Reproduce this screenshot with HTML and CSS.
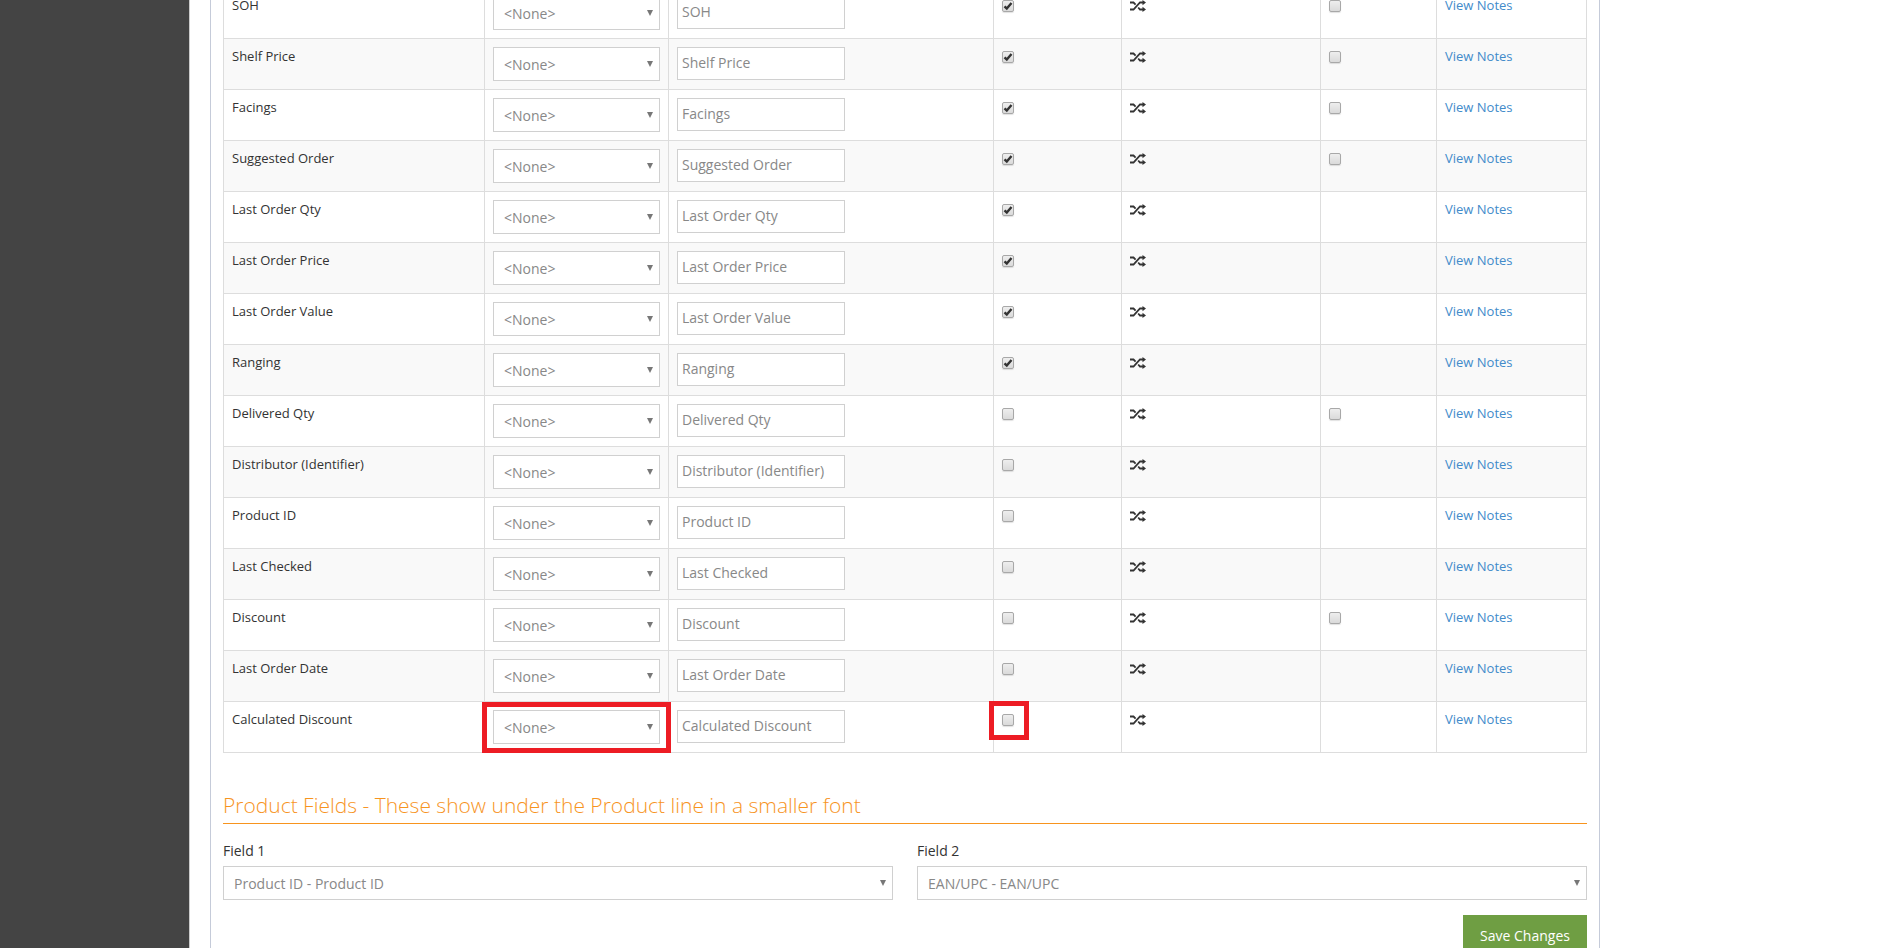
FILE: index.html
```html
<!DOCTYPE html>
<html lang="en">
<head>
    <meta charset="UTF-8">
    <meta name="viewport" content="width=device-width, initial-scale=1.0">
    <title>Order Fields</title>
    <link rel="stylesheet" href="styles.css">
</head>
<body>
    <svg class="sprite" aria-hidden="true">
        <symbol id="shuffle" viewBox="0 0 16 12">
            <path d="M0 2.500h3.500L5.600 4.600M0 9.500h3.500L10 2.500h3.500M8.200 7.500L10 9.500h3.500" fill="none" stroke="#333" stroke-width="1.800"/>
            <path d="M12.500 0L16 2.500 12.500 5.200zM12.500 6.800L16 9.500 12.500 12z" fill="#333"/>
        </symbol>
    </svg>
    <div class="page">
        <aside class="sidebar"></aside>
        <main class="panel">
            <table class="fields">
                <colgroup>
                    <col class="col-name">
                    <col class="col-map">
                    <col class="col-label">
                    <col class="col-show">
                    <col class="col-order">
                    <col class="col-edit">
                    <col class="col-notes">
                </colgroup>
                <tbody>
                    <tr>
                        <td>SOH</td>
                        <td><select aria-label="SOH mapping"><option>&lt;None&gt;</option></select></td>
                        <td><input type="text" aria-label="SOH label" value="SOH"></td>
                        <td><input type="checkbox" aria-label="Show SOH" checked></td>
                        <td><svg class="icon"><use href="#shuffle"/></svg></td>
                        <td><input type="checkbox" aria-label="Edit SOH"></td>
                        <td><a href="#">View Notes</a></td>
                    </tr>
                    <tr>
                        <td>Shelf Price</td>
                        <td><select aria-label="Shelf Price mapping"><option>&lt;None&gt;</option></select></td>
                        <td><input type="text" aria-label="Shelf Price label" value="Shelf Price"></td>
                        <td><input type="checkbox" aria-label="Show Shelf Price" checked></td>
                        <td><svg class="icon"><use href="#shuffle"/></svg></td>
                        <td><input type="checkbox" aria-label="Edit Shelf Price"></td>
                        <td><a href="#">View Notes</a></td>
                    </tr>
                    <tr>
                        <td>Facings</td>
                        <td><select aria-label="Facings mapping"><option>&lt;None&gt;</option></select></td>
                        <td><input type="text" aria-label="Facings label" value="Facings"></td>
                        <td><input type="checkbox" aria-label="Show Facings" checked></td>
                        <td><svg class="icon"><use href="#shuffle"/></svg></td>
                        <td><input type="checkbox" aria-label="Edit Facings"></td>
                        <td><a href="#">View Notes</a></td>
                    </tr>
                    <tr>
                        <td>Suggested Order</td>
                        <td><select aria-label="Suggested Order mapping"><option>&lt;None&gt;</option></select></td>
                        <td><input type="text" aria-label="Suggested Order label" value="Suggested Order"></td>
                        <td><input type="checkbox" aria-label="Show Suggested Order" checked></td>
                        <td><svg class="icon"><use href="#shuffle"/></svg></td>
                        <td><input type="checkbox" aria-label="Edit Suggested Order"></td>
                        <td><a href="#">View Notes</a></td>
                    </tr>
                    <tr>
                        <td>Last Order Qty</td>
                        <td><select aria-label="Last Order Qty mapping"><option>&lt;None&gt;</option></select></td>
                        <td><input type="text" aria-label="Last Order Qty label" value="Last Order Qty"></td>
                        <td><input type="checkbox" aria-label="Show Last Order Qty" checked></td>
                        <td><svg class="icon"><use href="#shuffle"/></svg></td>
                        <td></td>
                        <td><a href="#">View Notes</a></td>
                    </tr>
                    <tr>
                        <td>Last Order Price</td>
                        <td><select aria-label="Last Order Price mapping"><option>&lt;None&gt;</option></select></td>
                        <td><input type="text" aria-label="Last Order Price label" value="Last Order Price"></td>
                        <td><input type="checkbox" aria-label="Show Last Order Price" checked></td>
                        <td><svg class="icon"><use href="#shuffle"/></svg></td>
                        <td></td>
                        <td><a href="#">View Notes</a></td>
                    </tr>
                    <tr>
                        <td>Last Order Value</td>
                        <td><select aria-label="Last Order Value mapping"><option>&lt;None&gt;</option></select></td>
                        <td><input type="text" aria-label="Last Order Value label" value="Last Order Value"></td>
                        <td><input type="checkbox" aria-label="Show Last Order Value" checked></td>
                        <td><svg class="icon"><use href="#shuffle"/></svg></td>
                        <td></td>
                        <td><a href="#">View Notes</a></td>
                    </tr>
                    <tr>
                        <td>Ranging</td>
                        <td><select aria-label="Ranging mapping"><option>&lt;None&gt;</option></select></td>
                        <td><input type="text" aria-label="Ranging label" value="Ranging"></td>
                        <td><input type="checkbox" aria-label="Show Ranging" checked></td>
                        <td><svg class="icon"><use href="#shuffle"/></svg></td>
                        <td></td>
                        <td><a href="#">View Notes</a></td>
                    </tr>
                    <tr>
                        <td>Delivered Qty</td>
                        <td><select aria-label="Delivered Qty mapping"><option>&lt;None&gt;</option></select></td>
                        <td><input type="text" aria-label="Delivered Qty label" value="Delivered Qty"></td>
                        <td><input type="checkbox" aria-label="Show Delivered Qty"></td>
                        <td><svg class="icon"><use href="#shuffle"/></svg></td>
                        <td><input type="checkbox" aria-label="Edit Delivered Qty"></td>
                        <td><a href="#">View Notes</a></td>
                    </tr>
                    <tr>
                        <td>Distributor (Identifier)</td>
                        <td><select aria-label="Distributor mapping"><option>&lt;None&gt;</option></select></td>
                        <td><input type="text" aria-label="Distributor label" value="Distributor (Identifier)"></td>
                        <td><input type="checkbox" aria-label="Show Distributor"></td>
                        <td><svg class="icon"><use href="#shuffle"/></svg></td>
                        <td></td>
                        <td><a href="#">View Notes</a></td>
                    </tr>
                    <tr>
                        <td>Product ID</td>
                        <td><select aria-label="Product ID mapping"><option>&lt;None&gt;</option></select></td>
                        <td><input type="text" aria-label="Product ID label" value="Product ID"></td>
                        <td><input type="checkbox" aria-label="Show Product ID"></td>
                        <td><svg class="icon"><use href="#shuffle"/></svg></td>
                        <td></td>
                        <td><a href="#">View Notes</a></td>
                    </tr>
                    <tr>
                        <td>Last Checked</td>
                        <td><select aria-label="Last Checked mapping"><option>&lt;None&gt;</option></select></td>
                        <td><input type="text" aria-label="Last Checked label" value="Last Checked"></td>
                        <td><input type="checkbox" aria-label="Show Last Checked"></td>
                        <td><svg class="icon"><use href="#shuffle"/></svg></td>
                        <td></td>
                        <td><a href="#">View Notes</a></td>
                    </tr>
                    <tr>
                        <td>Discount</td>
                        <td><select aria-label="Discount mapping"><option>&lt;None&gt;</option></select></td>
                        <td><input type="text" aria-label="Discount label" value="Discount"></td>
                        <td><input type="checkbox" aria-label="Show Discount"></td>
                        <td><svg class="icon"><use href="#shuffle"/></svg></td>
                        <td><input type="checkbox" aria-label="Edit Discount"></td>
                        <td><a href="#">View Notes</a></td>
                    </tr>
                    <tr>
                        <td>Last Order Date</td>
                        <td><select aria-label="Last Order Date mapping"><option>&lt;None&gt;</option></select></td>
                        <td><input type="text" aria-label="Last Order Date label" value="Last Order Date"></td>
                        <td><input type="checkbox" aria-label="Show Last Order Date"></td>
                        <td><svg class="icon"><use href="#shuffle"/></svg></td>
                        <td></td>
                        <td><a href="#">View Notes</a></td>
                    </tr>
                    <tr>
                        <td>Calculated Discount</td>
                        <td><div class="mark mark-select"><select aria-label="Calculated Discount mapping"><option>&lt;None&gt;</option></select></div></td>
                        <td><input type="text" aria-label="Calculated Discount label" value="Calculated Discount"></td>
                        <td><div class="mark mark-check"><input type="checkbox" aria-label="Show Calculated Discount"></div></td>
                        <td><svg class="icon"><use href="#shuffle"/></svg></td>
                        <td></td>
                        <td><a href="#">View Notes</a></td>
                    </tr>
                </tbody>
            </table>

            <h2>Product Fields - These show under the Product line in a smaller font</h2>
            <div class="product-fields">
                <div class="form-group">
                    <label for="field1">Field 1</label>
                    <select id="field1"><option>Product ID - Product ID</option></select>
                </div>
                <div class="form-group">
                    <label for="field2">Field 2</label>
                    <select id="field2"><option>EAN/UPC - EAN/UPC</option></select>
                </div>
            </div>
            <div class="actions">
                <button type="submit">Save Changes</button>
            </div>
        </main>
    </div>
</body>
</html>
```
FILE: styles.css
```css
* {
    box-sizing: border-box;
}
body {
    margin: 0;
    font-family: "Open Sans", sans-serif;
    font-size: 13px;
    line-height: 18px;
    color: #333;
    background: #fff;
}
.sprite {
    display: none;
}
.page {
    display: flex;
    height: 100vh;
    overflow: hidden;
}
.sidebar {
    flex: 0 0 190px;
    background: #444;
    border-right: 1px solid #ccc;
}
/* the list is scrolled part way into its first row */
.panel {
    flex: 0 1 1390px;
    align-self: flex-start;
    margin: -13px 20px 0;
    padding: 0 12px 40px;
    border: 1px solid #c5cbd9;
    border-top: none;
}

.fields {
    width: 100%;
    table-layout: fixed;
    border-collapse: collapse;
}
.col-name { width: 261px; }
.col-map { width: 184px; }
.col-show { width: 128px; }
.col-order { width: 199px; }
.col-edit { width: 116px; }
.col-notes { width: 150px; }
.fields td {
    height: 51px;
    padding: 8px;
    border: 1px solid #ddd;
    vertical-align: top;
}
.fields tr:nth-child(even) {
    background: #f9f9f9;
}
a {
    color: #428bca;
    text-decoration: none;
}
.icon {
    display: block;
    width: 16px;
    height: 12px;
    margin-top: 4px;
}

select,
input[type="text"] {
    display: block;
    border: 1px solid #d0d0d0;
    border-radius: 0;
    background-color: #fff;
    font-family: inherit;
    font-size: 14px;
    color: #888;
}
select {
    appearance: none;
    width: 100%;
    height: 34px;
    padding: 7px 24px 6px 10px;
    line-height: 19px;
    background-image: url("data:image/svg+xml,%3Csvg xmlns='http://www.w3.org/2000/svg' width='6' height='6'%3E%3Cpath d='M0 0h6L3 6z' fill='%23777'/%3E%3C/svg%3E");
    background-repeat: no-repeat;
    background-position: right 6px top 13px;
}
input[type="text"] {
    width: 168px;
    height: 33px;
    padding: 5px 4px 7px;
}
input[type="checkbox"] {
    appearance: none;
    display: block;
    width: 12px;
    height: 12px;
    margin: 4px 0 0;
    border: 1px solid #a8a8a8;
    border-radius: 2px;
    background: linear-gradient(#eee, #dadada);
    box-shadow: 0 1px 1px rgba(0, 0, 0, 0.12);
}
input[type="checkbox"]:checked {
    background: url("data:image/svg+xml,%3Csvg xmlns='http://www.w3.org/2000/svg' width='10' height='10'%3E%3Cpath d='M1.500 5.300l2.300 2.300L8.500 2' fill='none' stroke='%23333' stroke-width='2.400'/%3E%3C/svg%3E"), linear-gradient(#eee, #dadada);
}

/* red callouts */
.mark {
    position: relative;
}
.mark::after {
    content: "";
    position: absolute;
    border: 5px solid #ed1c24;
    pointer-events: none;
}
.mark-select::after {
    inset: -8px -11px -9px;
}
.mark-check {
    width: 12px;
}
.mark-check::after {
    inset: -13px -15px -14px -13px;
}

h2 {
    margin: 38px 0 17px;
    padding-bottom: 4px;
    border-bottom: 1px solid #f7941e;
    font-size: 21px;
    font-weight: 300;
    line-height: 28px;
    color: #f7941e;
}
.product-fields {
    display: grid;
    grid-template-columns: 1fr 1fr;
    gap: 24px;
}
.form-group label {
    display: block;
    margin-bottom: 5px;
    font-size: 14px;
    line-height: 20px;
}
.actions {
    display: flex;
    justify-content: flex-end;
    margin-top: 15px;
}
button {
    width: 124px;
    height: 40px;
    border: none;
    background: #6f9e43;
    color: #fff;
    font-family: inherit;
    font-size: 14px;
    cursor: pointer;
}
button:hover {
    background: #5f8a38;
}
```
